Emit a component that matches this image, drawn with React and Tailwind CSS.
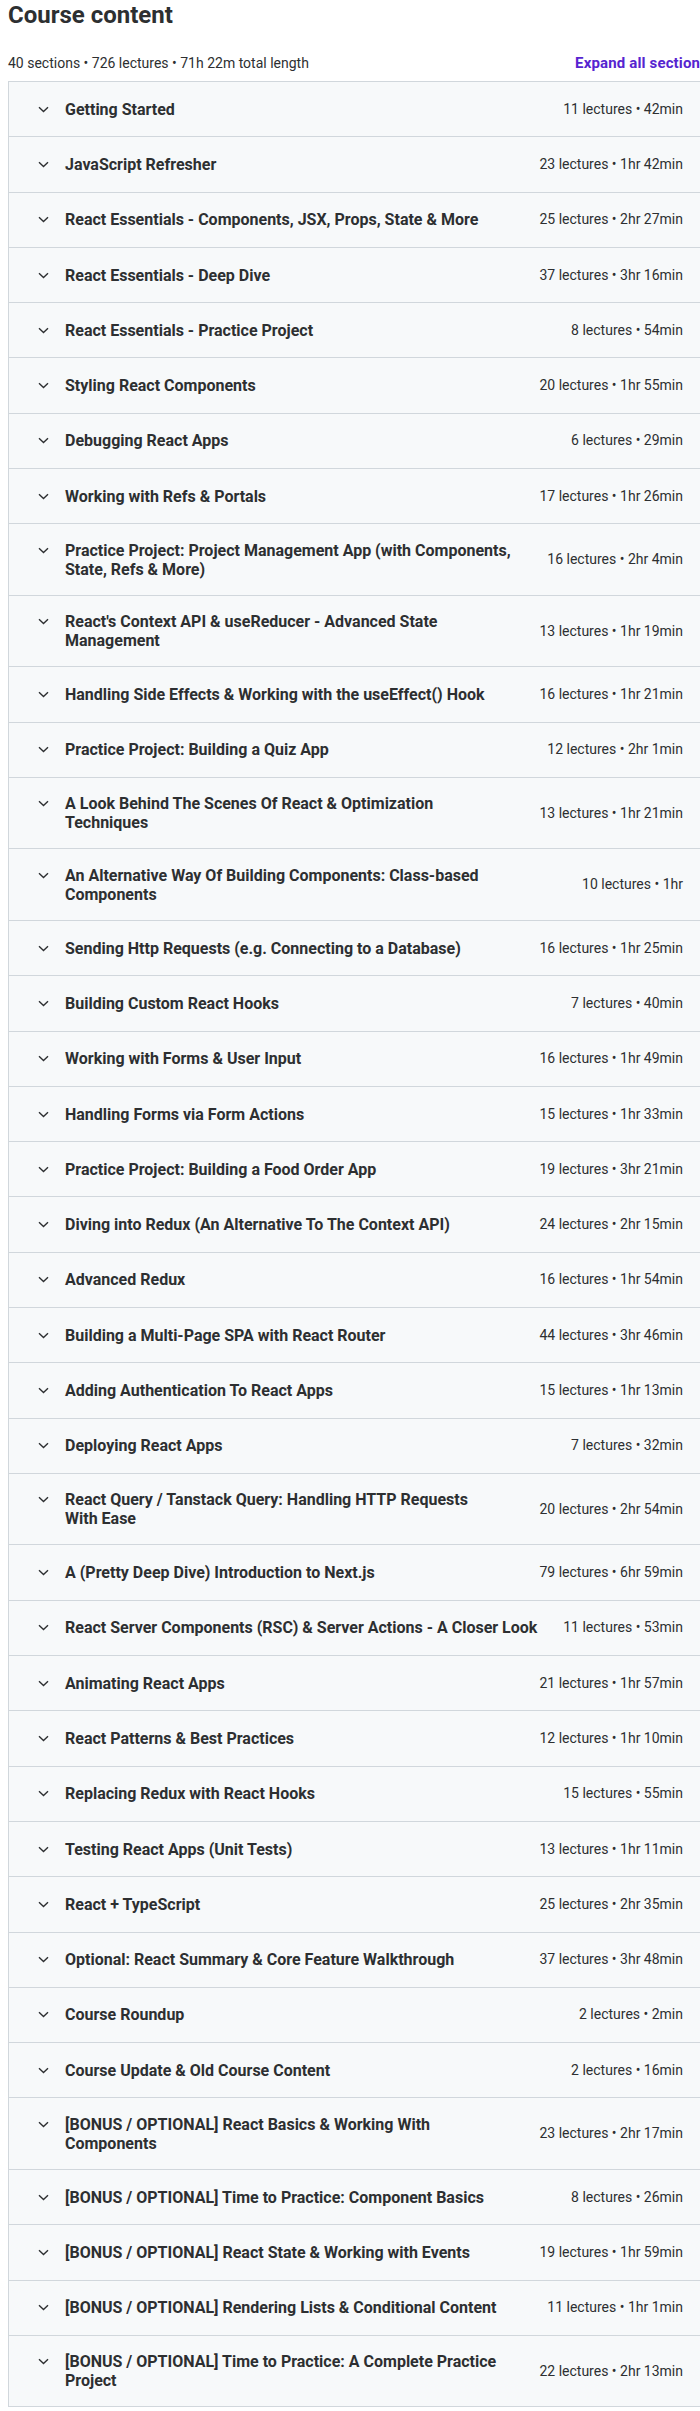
import React from 'react';

// '\n' marks where the reference wraps a long title
const sections = [
  ['Getting Started', '11 lectures • 42min'],
  ['JavaScript Refresher', '23 lectures • 1hr 42min'],
  ['React Essentials - Components, JSX, Props, State & More', '25 lectures • 2hr 27min'],
  ['React Essentials - Deep Dive', '37 lectures • 3hr 16min'],
  ['React Essentials - Practice Project', '8 lectures • 54min'],
  ['Styling React Components', '20 lectures • 1hr 55min'],
  ['Debugging React Apps', '6 lectures • 29min'],
  ['Working with Refs & Portals', '17 lectures • 1hr 26min'],
  ['Practice Project: Project Management App (with Components,\nState, Refs & More)', '16 lectures • 2hr 4min'],
  ["React's Context API & useReducer - Advanced State\nManagement", '13 lectures • 1hr 19min'],
  ['Handling Side Effects & Working with the useEffect() Hook', '16 lectures • 1hr 21min'],
  ['Practice Project: Building a Quiz App', '12 lectures • 2hr 1min'],
  ['A Look Behind The Scenes Of React & Optimization\nTechniques', '13 lectures • 1hr 21min'],
  ['An Alternative Way Of Building Components: Class-based\nComponents', '10 lectures • 1hr'],
  ['Sending Http Requests (e.g. Connecting to a Database)', '16 lectures • 1hr 25min'],
  ['Building Custom React Hooks', '7 lectures • 40min'],
  ['Working with Forms & User Input', '16 lectures • 1hr 49min'],
  ['Handling Forms via Form Actions', '15 lectures • 1hr 33min'],
  ['Practice Project: Building a Food Order App', '19 lectures • 3hr 21min'],
  ['Diving into Redux (An Alternative To The Context API)', '24 lectures • 2hr 15min'],
  ['Advanced Redux', '16 lectures • 1hr 54min'],
  ['Building a Multi-Page SPA with React Router', '44 lectures • 3hr 46min'],
  ['Adding Authentication To React Apps', '15 lectures • 1hr 13min'],
  ['Deploying React Apps', '7 lectures • 32min'],
  ['React Query / Tanstack Query: Handling HTTP Requests\nWith Ease', '20 lectures • 2hr 54min'],
  ['A (Pretty Deep Dive) Introduction to Next.js', '79 lectures • 6hr 59min'],
  ['React Server Components (RSC) & Server Actions - A Closer Look', '11 lectures • 53min'],
  ['Animating React Apps', '21 lectures • 1hr 57min'],
  ['React Patterns & Best Practices', '12 lectures • 1hr 10min'],
  ['Replacing Redux with React Hooks', '15 lectures • 55min'],
  ['Testing React Apps (Unit Tests)', '13 lectures • 1hr 11min'],
  ['React + TypeScript', '25 lectures • 2hr 35min'],
  ['Optional: React Summary & Core Feature Walkthrough', '37 lectures • 3hr 48min'],
  ['Course Roundup', '2 lectures • 2min'],
  ['Course Update & Old Course Content', '2 lectures • 16min'],
  ['[BONUS / OPTIONAL] React Basics & Working With\nComponents', '23 lectures • 2hr 17min'],
  ['[BONUS / OPTIONAL] Time to Practice: Component Basics', '8 lectures • 26min'],
  ['[BONUS / OPTIONAL] React State & Working with Events', '19 lectures • 1hr 59min'],
  ['[BONUS / OPTIONAL] Rendering Lists & Conditional Content', '11 lectures • 1hr 1min'],
  ['[BONUS / OPTIONAL] Time to Practice: A Complete Practice\nProject', '22 lectures • 2hr 13min'],
];

const Chevron = () => (
  <svg width="11" height="7" viewBox="0 0 11 7" fill="none">
    <path d="M1 1.2 L5.5 5.5 L10 1.2" stroke="#2d2f31" strokeWidth="1.4" />
  </svg>
);

const SectionRow = ({ title, info }) => (
  <div className="flex items-center gap-6 min-h-[55.3px] pl-6 pr-6 py-[16.25px] bg-[#f7f9fa] border border-b-0 border-[#d1d7dc]">
    <div className="flex flex-1 items-start min-w-0">
      <div className="w-5 h-[19px] flex items-center justify-center shrink-0">
        <Chevron />
      </div>
      <h3 className="ml-3 text-[16px] leading-[19px] font-bold text-[#2d2f31] whitespace-pre-line">{title}</h3>
    </div>
    <span className="shrink-0 text-[14px] leading-[19px] text-[#2d2f31]">{info}</span>
  </div>
);

const App = () => {
  return (
    <div className="w-[700px] overflow-hidden bg-white" style={{ fontFamily: 'Roboto, sans-serif' }}>
      <div className="w-[700px] ml-2">
        <h2 className="text-[24px] leading-[30px] font-bold text-[#2d2f31]">Course content</h2>
        <div className="flex items-center justify-between mt-[23px] mb-[8px]">
          <span className="text-[14px] leading-[20px] text-[#2d2f31]">40 sections • 726 lectures • 71h 22m total length</span>
          <button className="text-[15px] leading-[20px] font-bold tracking-[0.01em] text-[#5624d0] whitespace-nowrap">
            Expand all sections
          </button>
        </div>
        <div className="border-b border-[#d1d7dc]">
          {sections.map(([title, info]) => (
            <SectionRow key={title} title={title} info={info} />
          ))}
        </div>
      </div>
    </div>
  );
};

export default App;
